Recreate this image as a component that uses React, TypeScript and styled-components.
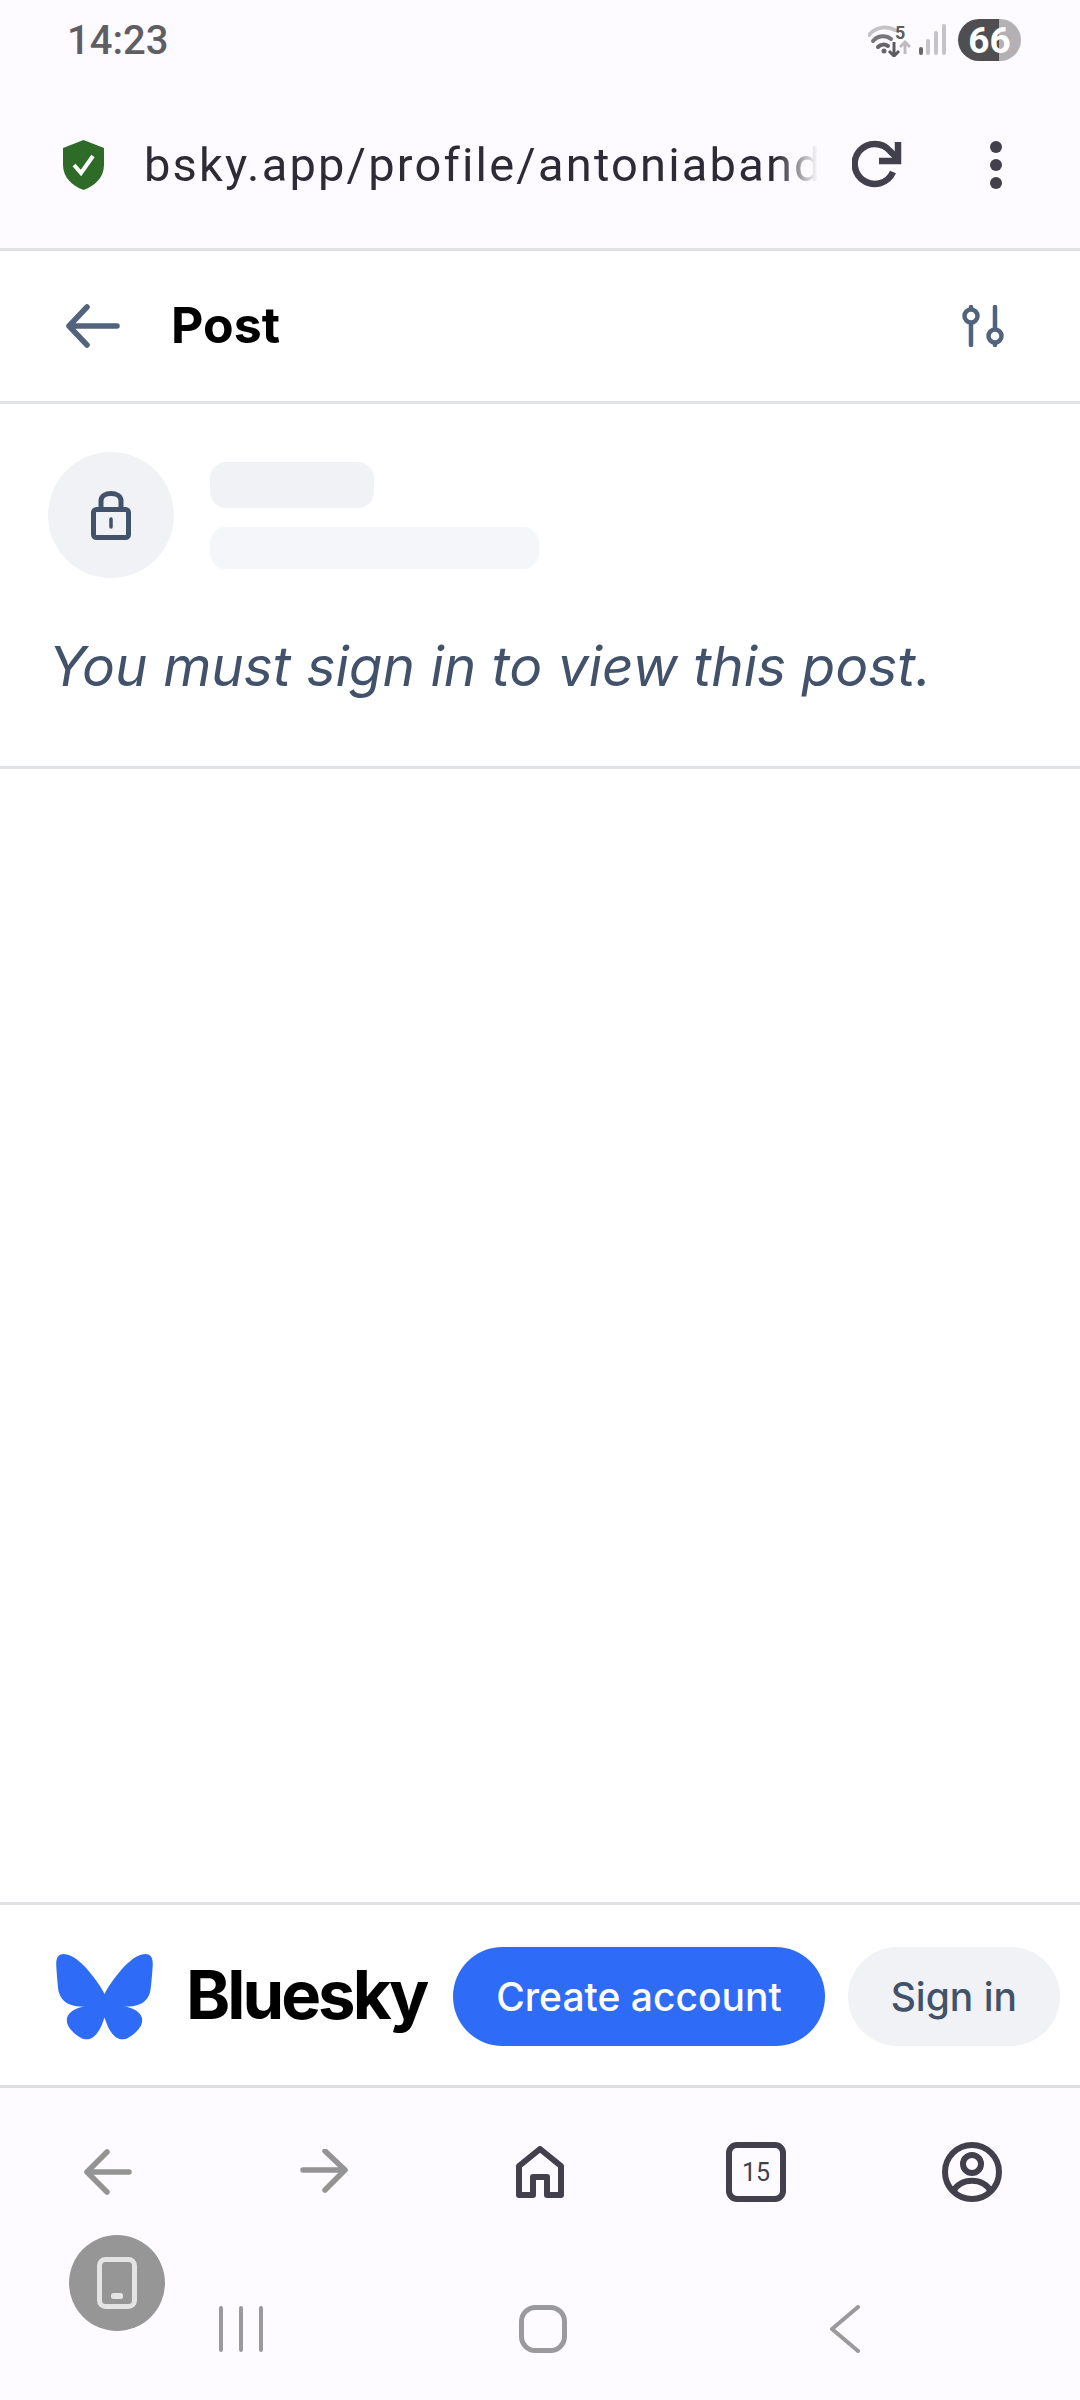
import React from 'react'
import styled, { createGlobalStyle } from 'styled-components'

const GlobalStyle = createGlobalStyle`
  html, body {
    margin: 0;
    padding: 0;
    background: #fff;
  }
  * {
    box-sizing: border-box;
  }
`

const Page = styled.div`
  position: relative;
  width: 1080px;
  height: 2400px;
  display: flex;
  flex-direction: column;
  overflow: hidden;
  background: #fff;
  font-family: Inter, 'Liberation Sans', sans-serif;
`

const StatusBar = styled.div`
  height: 84px;
  padding: 19px 59px 0 67px;
  display: flex;
  align-items: flex-start;
  justify-content: space-between;
  background: #fdfbff;
`
const Clock = styled.span`
  margin-top: 1px;
  font-family: Roboto, sans-serif;
  font-size: 40px;
  line-height: 42px;
  font-weight: 500;
  color: #5f5f63;
`
const StatusIcons = styled.div`
  display: flex;
  align-items: center;
  height: 42px;
`
const Battery = styled.span`
  width: 63px;
  height: 42px;
  margin-left: 12px;
  border-radius: 21px;
  display: flex;
  align-items: center;
  justify-content: center;
  background: linear-gradient(90deg, #4f4f51 65%, #b3b1b4 65%);
  font-family: Roboto, sans-serif;
  font-size: 37px;
  font-weight: 700;
  color: #fff;
`

const Toolbar = styled.div`
  height: 167px;
  padding: 0 0 3px 63px;
  display: flex;
  align-items: center;
  background: #fdfbff;
  border-bottom: 3px solid #e0e0e0;
`
const UrlText = styled.div`
  width: 674px;
  margin-left: 40px;
  margin-right: 1px;
  overflow: hidden;
  white-space: nowrap;
  font-family: Roboto, sans-serif;
  font-size: 47px;
  letter-spacing: 2.2px;
  color: #2d2c36;
  mask-image: linear-gradient(90deg, #000 94%, transparent 100%);
`
const ReloadSlot = styled.div`
  margin-left: 33px;
  display: flex;
`
const MenuSlot = styled.div`
  margin-left: 87px;
  display: flex;
`

const Header = styled.div`
  height: 153px;
  padding: 0 76px 0 66px;
  display: flex;
  align-items: center;
  border-bottom: 3px solid #dfe3e6;
`
const Title = styled.h1`
  flex: 1;
  margin: -3px 0 0 51px;
  font-size: 50px;
  line-height: 60px;
  font-weight: 700;
  color: #000;
`

const PostCard = styled.div`
  height: 365px;
  padding: 48px 48px 0;
  border-bottom: 3px solid #dfe3e6;
`
const MetaRow = styled.div`
  display: flex;
  gap: 36px;
`
const Avatar = styled.div`
  width: 126px;
  height: 126px;
  border-radius: 50%;
  background: #f0f2f6;
  display: flex;
  align-items: center;
  justify-content: center;
`
const Skeletons = styled.div`
  padding-top: 10px;
  display: flex;
  flex-direction: column;
  gap: 19px;
`
const SkeletonBar = styled.div<{ $width: number; $height: number; $tint: string }>`
  width: ${(p) => p.$width}px;
  height: ${(p) => p.$height}px;
  border-radius: 16px;
  background: ${(p) => p.$tint};
`
const Notice = styled.p`
  margin: 56px 0 0 1px;
  font-size: 55px;
  line-height: 64px;
  font-style: italic;
  color: #42526a;
`

const Spacer = styled.div`
  flex: 1;
`

const SignupBar = styled.div`
  height: 186px;
  padding: 2px 20px 0 56px;
  display: flex;
  align-items: center;
  border-top: 3px solid #e0e1e6;
  border-bottom: 3px solid #dedee2;
`
const Logo = styled.svg`
  margin-top: 2px;
`
const Wordmark = styled.span`
  margin: -2px 0 0 33px;
  font-size: 67px;
  line-height: 80px;
  font-weight: 700;
  letter-spacing: -3px;
  color: #000;
`
const PillButton = styled.div<{ $primary?: boolean }>`
  height: 99px;
  padding: 0 43px;
  margin-left: ${(p) => (p.$primary ? 'auto' : '23px')};
  border-radius: 50px;
  display: flex;
  align-items: center;
  font-size: 39px;
  font-weight: 500;
  white-space: nowrap;
  background: ${(p) => (p.$primary ? '#2e6bf6' : '#f0f2f6')};
  color: ${(p) => (p.$primary ? '#fff' : '#42526a')};
`

const BrowserBar = styled.div`
  height: 168px;
  display: grid;
  grid-template-columns: repeat(5, 216px);
  background: #fdfbff;
`
const BrowserButton = styled.div`
  display: flex;
  align-items: center;
  justify-content: center;
`
const TabCount = styled.div`
  width: 60px;
  height: 60px;
  border: 6px solid #41404c;
  border-radius: 11px;
  display: flex;
  align-items: center;
  justify-content: center;
  font-family: Roboto, sans-serif;
  font-size: 25px;
  font-weight: 400;
  color: #41404c;
`

const NavBar = styled.div`
  height: 144px;
  padding: 2px 0 0 90px;
  display: grid;
  grid-template-columns: repeat(3, 302px);
  background: #fdfbff;
`
const NavButton = styled.div`
  display: flex;
  align-items: center;
  justify-content: center;
`
const FloatingBubble = styled.div`
  position: absolute;
  left: 69px;
  top: 2235px;
  width: 96px;
  height: 96px;
  border-radius: 50%;
  background: #969696;
  display: flex;
  align-items: center;
  justify-content: center;
`

const App = () => {
  return (
    <Page>
      <GlobalStyle />
      <StatusBar>
        <Clock>14:23</Clock>
        <StatusIcons>
          <svg width="78" height="34" viewBox="0 0 78 34" fill="none">
            <path d="M1 12C8 3 20 3 27 7" stroke="#c4c4c6" strokeWidth="4" strokeLinecap="round" />
            <path d="M5 18C10 12 18 12 23 16" stroke="#77777a" strokeWidth="4" strokeLinecap="round" />
            <path d="M10 24C13 21 17 21 20 23" stroke="#66666a" strokeWidth="4" strokeLinecap="round" />
            <circle cx="16" cy="28" r="2.5" fill="#66666a" />
            <path d="M26 19V33M21 28L26 33L31 28" stroke="#5c5c60" strokeWidth="3" />
            <path d="M37 31V19M32 24L37 19L42 24" stroke="#bcbcbe" strokeWidth="3" />
            <text x="27" y="16" fontFamily="Roboto, sans-serif" fontSize="18" fontWeight="700" fill="#5c5c60">5</text>
            <rect x="51" y="24" width="4" height="8" rx="2" fill="#66666a" />
            <rect x="58" y="16" width="4" height="16" rx="2" fill="#c4c4c6" />
            <rect x="66" y="8" width="4" height="24" rx="2" fill="#c4c4c6" />
            <rect x="74" y="1" width="4" height="31" rx="2" fill="#c4c4c6" />
          </svg>
          <Battery>66</Battery>
        </StatusIcons>
      </StatusBar>

      <Toolbar>
        <svg width="41" height="50" viewBox="0 0 41 50">
          <path d="M20.5 0L41 8V25C41 37 32 46 20.5 50C9 46 0 37 0 25V8Z" fill="#2e6b28" />
          <path d="M11 25L18 33L30 16" fill="none" stroke="#fff" strokeWidth="4" />
        </svg>
        <UrlText>bsky.app/profile/antoniaband</UrlText>
        <ReloadSlot>
          <svg width="50" height="50" viewBox="0 0 50 50" fill="none" stroke="#41404c" strokeWidth="6.5">
            <path d="M41 32A20 20 0 1 1 38 11L45 18" />
            <path d="M46 2V21H27" />
          </svg>
        </ReloadSlot>
        <MenuSlot>
          <svg width="14" height="48" viewBox="0 0 14 48" fill="#41404c">
            <circle cx="7" cy="6" r="6" />
            <circle cx="7" cy="24" r="6" />
            <circle cx="7" cy="42" r="6" />
          </svg>
        </MenuSlot>
      </Toolbar>

      <Header>
        <svg width="54" height="44" viewBox="0 0 54 44" fill="none" stroke="#52637d" strokeWidth="5.5" strokeLinecap="round" strokeLinejoin="round">
          <path d="M51 22H3M21 3L3 22L21 41" />
        </svg>
        <Title>Post</Title>
        <svg width="42" height="42" viewBox="0 0 42 42" fill="none" stroke="#52637d" strokeWidth="4.5" strokeLinecap="round">
          <circle cx="9" cy="11" r="6.5" />
          <path d="M9 2V4M9 18V40" />
          <circle cx="33" cy="31" r="6.5" />
          <path d="M33 2V24M33 38V40" />
        </svg>
      </Header>

      <PostCard>
        <MetaRow>
          <Avatar>
            <svg width="40" height="50" viewBox="0 0 40 50" fill="none" stroke="#42526a" strokeWidth="5">
              <path d="M10 19V11C10 1 30 1 30 11V19" />
              <rect x="2.5" y="19.5" width="35" height="28" rx="3" />
              <path d="M20 29V37" strokeWidth="3.5" strokeLinecap="round" />
            </svg>
          </Avatar>
          <Skeletons>
            <SkeletonBar $width={164} $height={46} $tint="#f0f2f6" />
            <SkeletonBar $width={329} $height={42} $tint="#f5f6fa" />
          </Skeletons>
        </MetaRow>
        <Notice>You must sign in to view this post.</Notice>
      </PostCard>

      <Spacer />

      <SignupBar>
        <Logo width="97" height="86" viewBox="0 0 64 57" fill="#2e6bf6">
          <path d="M13.873 3.805C21.21 9.332 29.103 20.537 32 26.55v15.882c0-.338-.13.044-.41.867-1.512 4.456-7.418 21.847-20.923 7.944-7.111-7.32-3.819-14.64 9.125-16.85-7.405 1.264-15.73-.825-18.014-9.015C1.12 23.022 0 8.51 0 6.55 0-3.268 8.579-.182 13.873 3.805ZM50.127 3.805C42.79 9.332 34.897 20.537 32 26.55v15.882c0-.338.13.044.41.867 1.512 4.456 7.418 21.847 20.923 7.944 7.111-7.32 3.819-14.64-9.125-16.85 7.405 1.264 15.73-.825 18.014-9.015C62.88 23.022 64 8.51 64 6.55c0-9.818-8.578-6.732-13.873-2.745Z" />
        </Logo>
        <Wordmark>Bluesky</Wordmark>
        <PillButton $primary>Create account</PillButton>
        <PillButton>Sign in</PillButton>
      </SignupBar>

      <BrowserBar>
        <BrowserButton>
          <svg width="48" height="46" viewBox="0 0 48 46" fill="none" stroke="#949494" strokeWidth="5.5" strokeLinecap="round" strokeLinejoin="round">
            <path d="M45 23H3M23 3L3 23L23 43" />
          </svg>
        </BrowserButton>
        <BrowserButton>
          <svg width="48" height="46" viewBox="0 0 48 46" fill="none" stroke="#949494" strokeWidth="5.5" strokeLinecap="round" strokeLinejoin="round">
            <path d="M3 21H45M25 2L45 21L25 41" />
          </svg>
        </BrowserButton>
        <BrowserButton>
          <svg width="48" height="52" viewBox="0 0 48 52" fill="none" stroke="#41404c" strokeWidth="6" strokeLinejoin="round">
            <path d="M3 20L24 3L45 20V49H31V31H17V49H3Z" />
          </svg>
        </BrowserButton>
        <BrowserButton>
          <TabCount>15</TabCount>
        </BrowserButton>
        <BrowserButton>
          <svg width="60" height="60" viewBox="0 0 60 60" fill="none" stroke="#41404c" strokeWidth="6">
            <circle cx="30" cy="30" r="27" />
            <circle cx="30" cy="22" r="9" />
            <path d="M11 50C17 35 43 35 49 50" />
          </svg>
        </BrowserButton>
      </BrowserBar>

      <NavBar>
        <NavButton>
          <svg width="44" height="46" viewBox="0 0 44 46" stroke="#9a9a9c" strokeWidth="4" strokeLinecap="round">
            <path d="M2 2V44M22 2V44M42 2V44" />
          </svg>
        </NavButton>
        <NavButton>
          <svg width="48" height="48" viewBox="0 0 48 48" fill="none">
            <rect x="2.5" y="2.5" width="43" height="43" rx="14" stroke="#9a9a9c" strokeWidth="5" />
          </svg>
        </NavButton>
        <NavButton>
          <svg width="30" height="48" viewBox="0 0 30 48" fill="none" stroke="#9a9a9c" strokeWidth="4" strokeLinecap="round" strokeLinejoin="round">
            <path d="M28 2L2 24L28 46" />
          </svg>
        </NavButton>
      </NavBar>

      <FloatingBubble>
        <svg width="40" height="52" viewBox="0 0 40 52" fill="none">
          <rect x="2.5" y="2.5" width="35" height="47" rx="6" stroke="#e4e4e4" strokeWidth="5" />
          <rect x="14" y="36" width="12" height="6" rx="2.5" fill="#e4e4e4" />
        </svg>
      </FloatingBubble>
    </Page>
  )
}

export default App
